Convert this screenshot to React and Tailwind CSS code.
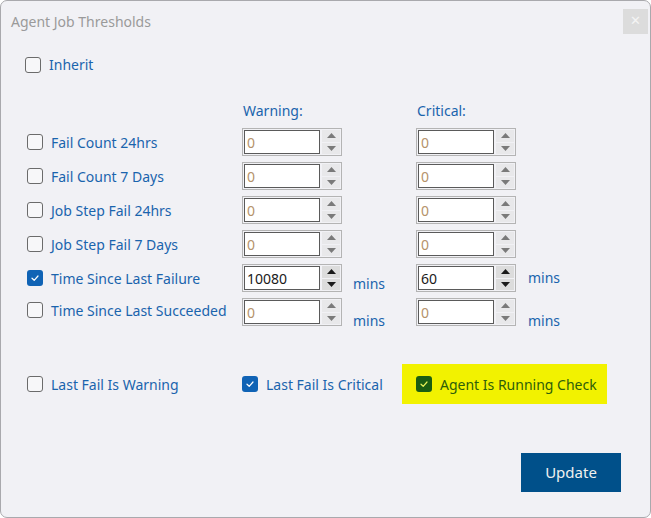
import React from "react";

const font = { fontFamily: '"Noto Sans", "Open Sans", sans-serif' };

function Check({ checked, green }) {
  if (checked) {
    return (
      <span
        className={`flex h-[16px] w-[16px] shrink-0 items-center justify-center rounded-[3px] ${green ? "bg-[#1b5e12]" : "bg-[#1063b5]"}`}
      >
        <svg width="10" height="10" viewBox="0 0 10 10">
          <path d="M2 5.2 L4.2 7.3 L8 3" fill="none" stroke={green ? "#e9f25a" : "#ffffff"} strokeWidth="1.2" strokeLinecap="round" strokeLinejoin="round" />
        </svg>
      </span>
    );
  }
  return <span className="h-[16px] w-[16px] shrink-0 rounded-[3px] border border-[#6b6b6b] bg-[#f7f7f9]" />;
}

function Spin({ value, active }) {
  const arrow = active ? "#1a1a1a" : "#7a7a7a";
  return (
    <div className="flex h-[28px] w-[100px] shrink-0 items-center gap-[2px] border border-[#b4b4b4] bg-[#f1f1f5] p-[1px]">
      <div
        className={`flex h-[24px] w-[76px] items-center border border-[#5a5a5a] bg-white pl-[2px] text-[14px] ${active ? "text-[#1a1a1a]" : "text-[#b5926a]"}`}
      >
        {value}
      </div>
      <div className="flex h-[24px] w-[18px] flex-col gap-[1px]">
        <div className={`flex flex-1 items-center justify-center ${active ? "bg-[#dcdcdc]" : "bg-[#e8e8ea]"}`}>
          <svg width="9" height="5" viewBox="0 0 9 5"><path d="M0 5 L4.5 0 L9 5 Z" fill={arrow} /></svg>
        </div>
        <div className={`flex flex-1 items-center justify-center ${active ? "bg-[#dcdcdc]" : "bg-[#e8e8ea]"}`}>
          <svg width="9" height="5" viewBox="0 0 9 5"><path d="M0 0 L9 0 L4.5 5 Z" fill={arrow} /></svg>
        </div>
      </div>
    </div>
  );
}

function Row({ label, checked, w, c, mins, minsW, minsC, alignTop }) {
  return (
    <div className="flex h-[34px] items-center">
      <div className={`flex w-[215px] items-center gap-[8px] ${alignTop ? "-mt-[4px]" : ""}`}>
        <Check checked={checked} />
        <span className="text-[14px] text-[#1a64ad]">{label}</span>
      </div>
      <Spin value={w} active={checked} />
      <div className="w-[74px] pl-[11px] text-[14px] text-[#1a64ad]">
        {mins && <span className={`block ${minsW}`}>mins</span>}
      </div>
      <Spin value={c} active={checked} />
      <div className="pl-[12px] text-[14px] text-[#1a64ad]">
        {mins && <span className={`block ${minsC}`}>mins</span>}
      </div>
    </div>
  );
}

export default function App() {
  return (
    <div className="h-[518px] w-[651px] bg-white" style={font}>
      <div className="relative flex h-[518px] w-[651px] flex-col rounded-[7px] border border-[#a9a9ad] bg-[#f1f1f5]">
        <div className="flex h-[40px] items-center justify-between pl-[10px] pr-[2px]">
          <span className="text-[14px] text-[#9a9a9a]">Agent Job Thresholds</span>
          <div className="flex h-[25px] w-[25px] items-center justify-center bg-[#dcdcdc] text-[13px] text-[#f4f4f4]">✕</div>
        </div>

        <div className="mt-[13px] flex items-center gap-[8px] pl-[24px]">
          <Check />
          <span className="text-[14px] text-[#1a64ad]">Inherit</span>
        </div>

        <div className="mt-[25px] flex pl-[242px] text-[14px] text-[#1a64ad]">
          <span className="w-[174px]">Warning:</span>
          <span>Critical:</span>
        </div>

        <div className="mt-[4px] flex flex-col pl-[26px]">
          <Row label="Fail Count 24hrs" w="0" c="0" />
          <Row label="Fail Count 7 Days" w="0" c="0" />
          <Row label="Job Step Fail 24hrs" w="0" c="0" />
          <Row label="Job Step Fail 7 Days" w="0" c="0" />
          <Row label="Time Since Last Failure" checked w="10080" c="60" mins minsW="mt-[10px]" minsC="-mt-[2px]" />
          <Row label="Time Since Last Succeeded" w="0" c="0" mins minsW="mt-[16px]" minsC="mt-[16px]" alignTop />
        </div>

        <div className="mt-[35px] flex items-center pl-[26px]">
          <div className="flex w-[215px] items-center gap-[8px]">
            <Check />
            <span className="text-[14px] text-[#1a64ad]">Last Fail Is Warning</span>
          </div>
          <div className="flex w-[160px] items-center gap-[8px]">
            <Check checked />
            <span className="text-[14px] text-[#1a64ad]">Last Fail Is Critical</span>
          </div>
          <div className="flex h-[40px] w-[205px] items-center gap-[8px] bg-[#f2f200] pl-[14px]">
            <Check checked green />
            <span className="text-[14px] text-[#2e5e0a]">Agent Is Running Check</span>
          </div>
        </div>

        <div className="mt-[49px] flex justify-end pr-[29px]">
          <button className="h-[39px] w-[100px] bg-[#00508a] text-[15px] text-[#f0f0f0]">Update</button>
        </div>
      </div>
    </div>
  );
}
